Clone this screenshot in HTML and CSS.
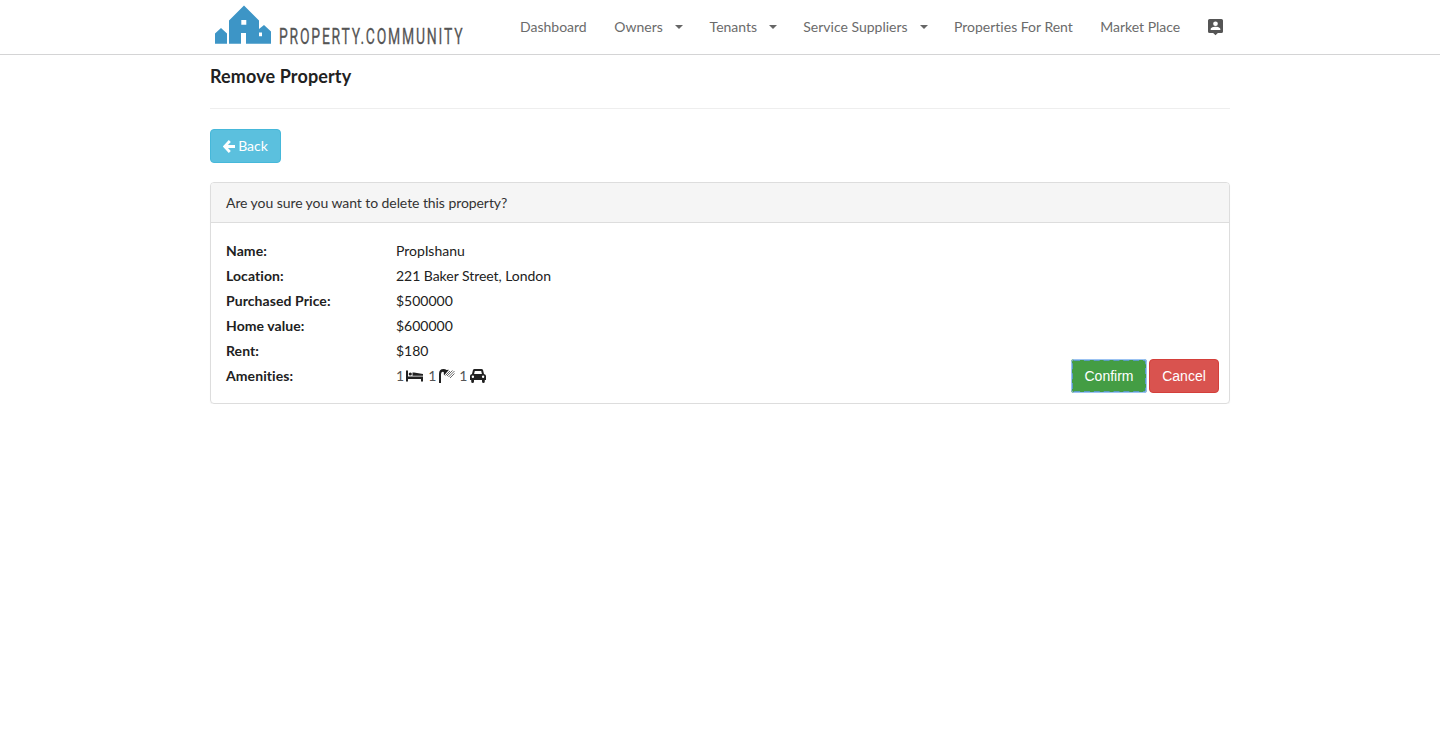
FILE: index.html
```html
<!DOCTYPE html>
<html lang="en">
<head>
<meta charset="utf-8">
<title>Remove Property</title>
<link rel="stylesheet" href="styles.css">
</head>
<body>
<header class="topbar">
  <div class="container topbar-inner">
    <a class="logo">
      <svg width="255" height="54" viewBox="0 0 255 54">
        <path fill="#3d95c6" fill-rule="evenodd" d="M5 43.700V33.500L11 28L17 33.500V43.700ZM19 43.700V20.500L34 5.500L49 20.500V29L54 25L61 31.500V43.700H36V33H31V43.700ZM31.300 20V24.700H36.300V20ZM49 32.500V36.200H52V32.500Z"/>
        <text class="logo-text" transform="translate(69 43.800) scale(.62 1)" x="0" y="0" textLength="296" lengthAdjust="spacing">PROPERTY.COMMUNITY</text>
      </svg>
    </a>
    <nav class="menu">
      <a>Dashboard</a>
      <a class="drop">Owners<i class="caret"></i></a>
      <a class="drop">Tenants<i class="caret"></i></a>
      <a class="drop wide">Service Suppliers<i class="caret"></i></a>
      <a>Properties For Rent</a>
      <a class="market">Market Place</a>
      <a class="user">
        <svg width="15" height="17" viewBox="0 0 14 17" preserveAspectRatio="none"><path fill="#555" fill-rule="evenodd" d="M1.500 0H12.500Q14 0 14 1.500V12.500Q14 14 12.500 14H9.200L7 16.300L4.800 14H1.500Q0 14 0 12.500V1.500Q0 0 1.500 0ZM7 2.500A2.200 2.200 0 1 0 7 6.900A2.200 2.200 0 1 0 7 2.500ZM2.500 11H11.500V10C11.500 8.500 8.800 7.700 7 7.700S2.500 8.500 2.500 10Z"/></svg>
      </a>
    </nav>
  </div>
</header>
<main class="container">
  <h1>Remove Property</h1>
  <a class="btn back"><svg width="12" height="13" viewBox="0 0 12 13"><path d="M6.800 1L1.600 6.500L6.800 12M2 6.500H12" fill="none" stroke="#fff" stroke-width="2.800"/></svg><span>Back</span></a>
  <section class="panel">
    <div class="panel-head">Are you sure you want to delete this property?</div>
    <div class="panel-body">
      <dl class="details">
        <dt>Name:</dt><dd>PropIshanu</dd>
        <dt>Location:</dt><dd class="address">221 Baker Street, London</dd>
        <dt>Purchased Price:</dt><dd>$500000</dd>
        <dt>Home value:</dt><dd>$600000</dd>
        <dt>Rent:</dt><dd>$180</dd>
        <dt>Amenities:</dt>
        <dd class="amenities">
          <span>1</span>
          <svg class="bed" width="17" height="12" viewBox="0 0 17 12"><path d="M0 .5H2V6.500H17V11.500H15V9H2V11.500H0ZM6.500 2.500H8L17 4V5.700H6.500Z"/><circle cx="4.300" cy="4" r="1.600"/></svg>
          <span>1</span>
          <svg class="shower" width="16" height="14" viewBox="0 0 16 14"><path d="M0 14V5Q0 0 4.500 0Q6.500 0 7.500 1L10 .8L5 6.500L4.700 3Q2 2 2 5.500V14Z"/><path d="M11 2L6.500 6.500M13.500 1.500L8 7M15.500 2L9.500 8M15.500 4.500L11 9" fill="none" stroke="#444" stroke-width=".8"/></svg>
          <span>1</span>
          <svg class="car" width="16" height="14" viewBox="0 0 16 14"><path fill-rule="evenodd" d="M4.500 0H11.500Q12.700 0 13.100 1.300L14 5Q16 5.300 16 7V11H14.800V12.500Q14.800 14 13.400 14T12 12.500V11H4V12.500Q4 14 2.600 14T1.200 12.500V11H0V7Q0 5.300 2 5L2.900 1.300Q3.300 0 4.500 0ZM4.800 1.900L4.100 5H11.900L11.200 1.900ZM2.900 6.600A1.200 1.200 0 1 0 2.900 9A1.200 1.200 0 1 0 2.900 6.600ZM13.100 6.600A1.200 1.200 0 1 0 13.100 9A1.200 1.200 0 1 0 13.100 6.600Z"/></svg>
        </dd>
      </dl>
      <div class="actions">
        <button class="btn confirm">Confirm</button>
        <button class="btn cancel">Cancel</button>
      </div>
    </div>
  </section>
</main>
</body>
</html>
```
FILE: styles.css
```css
* { box-sizing: border-box; }
body { margin: 0; background: #fff; color: #212121; font: 14px/20px Lato, sans-serif; font-variant-ligatures: none; }
.container { width: 1020px; margin: 0 auto; }
.topbar { height: 55px; border-bottom: 1px solid #d4d4d5; }
.topbar-inner { display: flex; height: 54px; }
.logo { width: 296px; }
.logo svg { display: block; }
.logo-text { font: 22.500px Roboto, sans-serif; fill: #555; stroke: #555; stroke-width: .3px; }
.menu { display: flex; align-items: center; color: #6b6b6b; }
.menu a { display: flex; align-items: center; padding: 0 13.400px; white-space: nowrap; }
.menu a:first-child { padding-left: 14px; padding-right: 14.200px; }
.menu .wide { padding-left: 12.800px; padding-right: 13px; }
.menu .market { padding-left: 13.900px; padding-right: 14px; }
.caret { margin-left: 12px; border: 4px solid transparent; border-top-color: #666; border-bottom: 0; }
.menu .user { padding-right: 0; }
h1 { height: 54px; margin: 0 0 20px; padding-top: 11px; border-bottom: 1px solid #eee; font-size: 18px; line-height: 20px; font-weight: 700; letter-spacing: .12px; }
.btn { display: inline-flex; align-items: center; justify-content: center; height: 34px; padding: 0 12px; border: 1px solid; border-radius: 4px; color: #fff; font-size: 14px; line-height: 20px; }
.back { width: 71px; gap: 3px; background: #5bc0de; border-color: #46b8da; }
.panel { margin-top: 19px; border: 1px solid #ddd; border-radius: 4px; box-shadow: 0 1px 1px rgba(0,0,0,.05); }
.panel-head { height: 40px; padding: 10px 15px; background: #f5f5f5; border-bottom: 1px solid #ddd; border-radius: 3px 3px 0 0; color: #333; letter-spacing: -.01px; }
.panel-head { letter-spacing: -.07px; }
.panel-body { display: flex; justify-content: space-between; align-items: flex-end; height: 180px; padding: 0 10px 10px 15px; }
.details { display: grid; grid-template-columns: 170px auto; grid-auto-rows: 25px; align-self: flex-start; margin: 15px 0 0; line-height: 25px; }
dt { font-weight: 700; letter-spacing: .08px; }
dd { margin: 0; }
.address { letter-spacing: -.04px; }
.amenities { display: flex; align-items: center; color: #555; }
.amenities svg { fill: #212121; }
.bed { margin: 0 5px 0 2px; }
.shower { margin: 0 4px 0 3px; }
.car { margin-left: 3px; }
.actions { display: flex; gap: 2px; }
.actions .btn { font-family: "Liberation Sans", sans-serif; }
.confirm { width: 76px; background: #449d44; border-color: #398439; outline: 1px solid #9cc3f2; outline-offset: -1px; }
.confirm { border: 2px dashed #5b9bc4; border-radius: 3px; }
.cancel { width: 70px; background: #d9534f; border-color: #d43f3a; }
```
